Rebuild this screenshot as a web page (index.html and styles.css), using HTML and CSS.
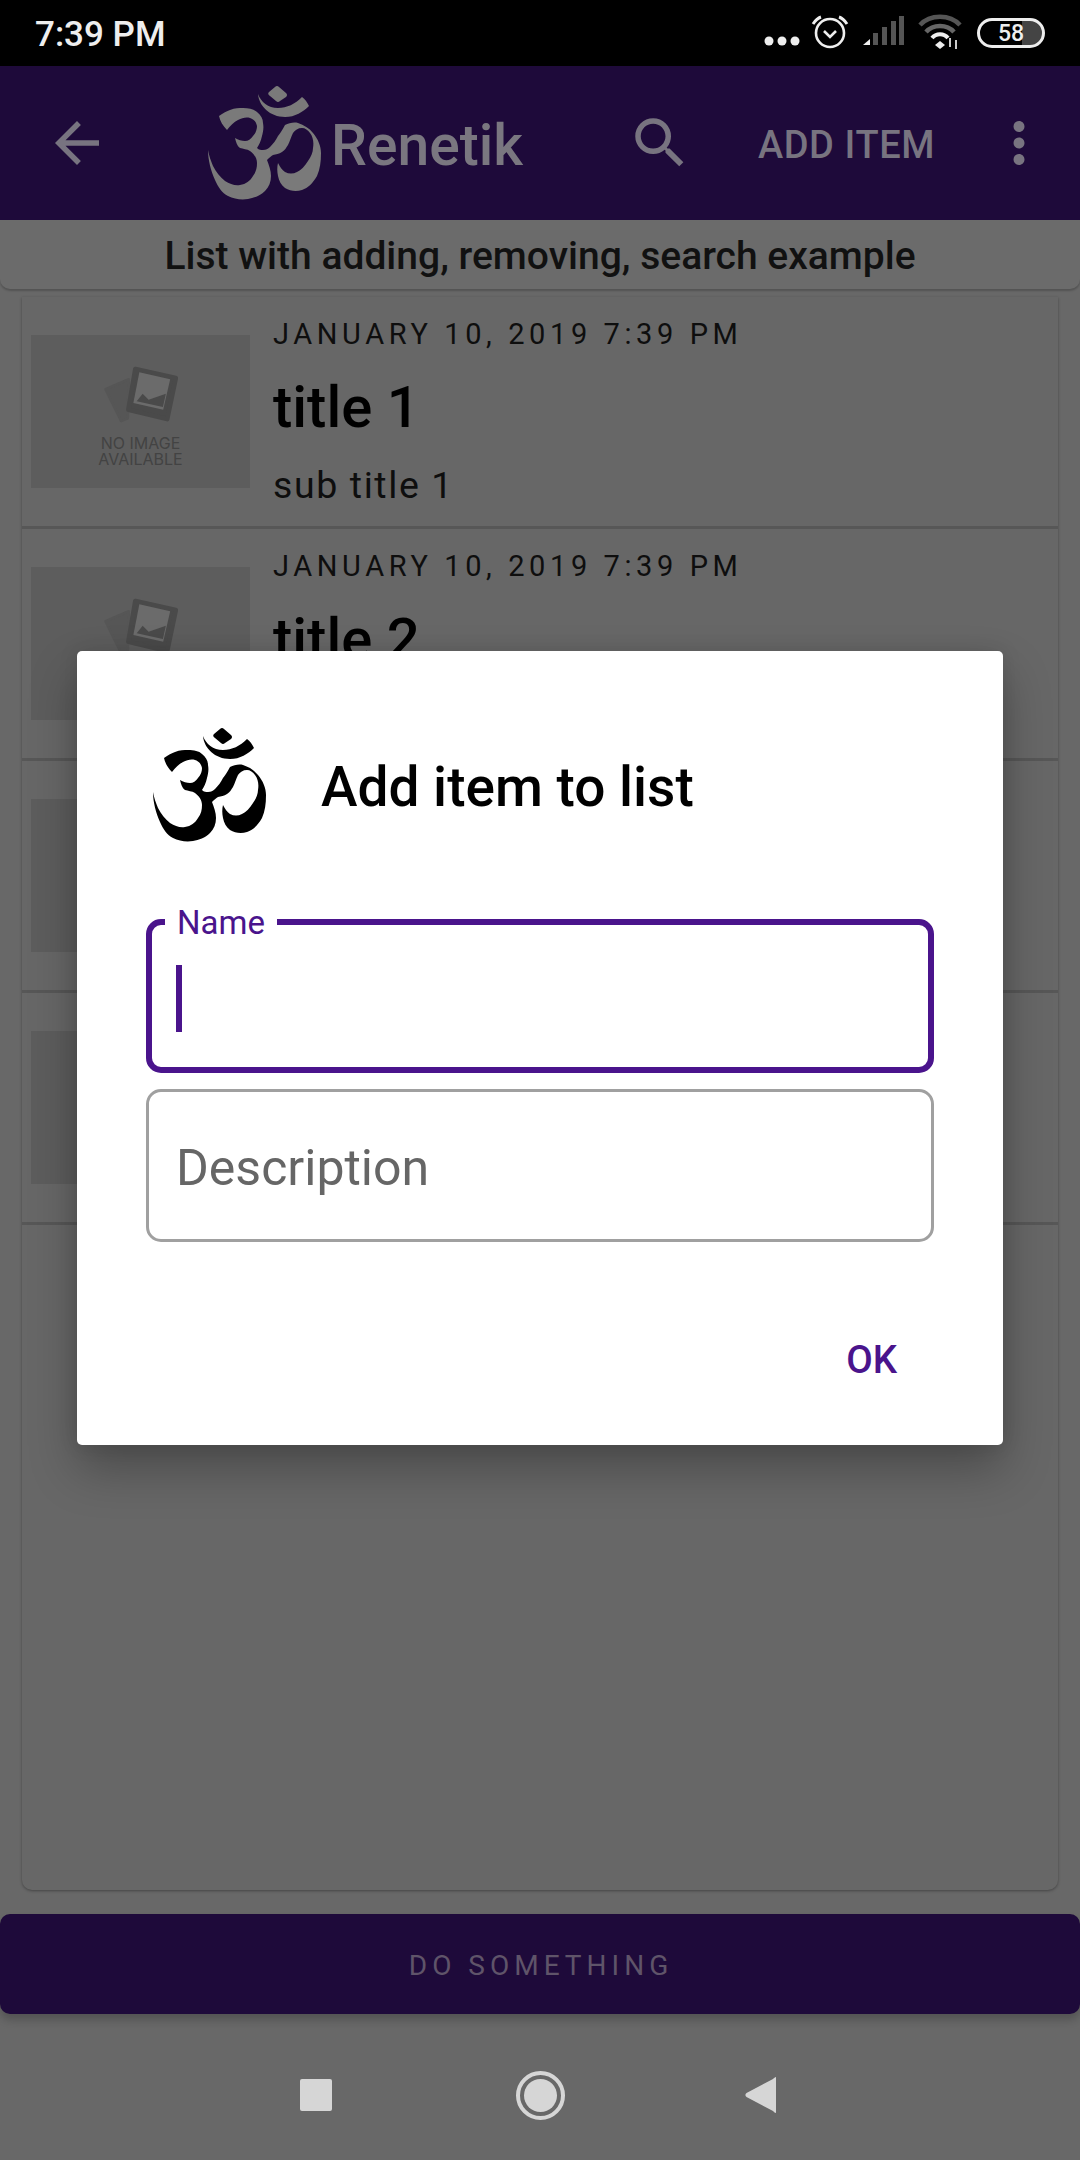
FILE: index.html
```html
<!DOCTYPE html>
<html lang="en">

<head>
    <meta charset="UTF-8">
    <meta name="viewport" content="width=device-width, initial-scale=1.0">
    <title>Renetik</title>
    <link rel="stylesheet" href="styles.css">
</head>

<body>
    <svg class="defs" width="0" height="0">
        <symbol id="om" viewBox="20 24 120 122">
            <path d="M90 29 Q92 27 94 29 L101 35 Q103 37 101 39 L95 43 Q93 45 91 43 L85 38 Q82 36 84 34Z" />
            <path d="M73 36 C74 48 85 59 100 59 C110 59 118 54 124 48 C122 44 120 41 117 39 C110 46 102 50 93 50 C83 50 76 44 73 36Z" />
            <path d="M34 58 C38 55 42 53 45 52 C50 50 54 50 58 50 C64 50 69 51 72 54 C76 57 78 61 78 65 C79 70 78 74 77 78 C76 83 74 87 72 90 C74 92 76 92 78 92 C81 92 83 91 85 89 C88 86 91 82 93 78 C96 74 98 71 100 67 C104 65 109 64 113 65 C119 67 124 70 128 75 C133 81 136 88 136 95 C136 104 135 111 132 118 C128 125 123 130 117 132 C111 134 105 133 100 130 C96 127 94 123 93 118 C92 113 92 109 93 105 C95 109 97 112 100 114 C104 116 108 116 112 114 C116 112 120 108 123 103 C126 99 128 94 128 90 C129 84 128 79 125 75 C123 72 120 70 117 70 C113 70 110 72 108 75 C106 79 105 83 103 87 C101 90 100 92 97 94 C94 96 91 96 88 97 C86 98 84 100 82 102 C84 107 86 113 86 118 C86 124 84 129 80 133 C75 138 69 140 63 141 C56 142 49 141 43 138 C37 135 33 129 30 122 C26 113 23 102 23 92 C24 98 26 103 28 108 C31 114 35 119 40 123 C45 126 50 128 55 127 C61 126 65 123 68 118 C71 114 72 110 72 105 C72 100 69 96 65 93 C62 91 58 91 55 90 C52 88 51 84 50 80 C53 82 57 83 60 83 C63 83 66 81 68 78 C71 75 72 71 72 68 C71 63 68 61 65 60 C61 59 57 60 53 62 C49 64 45 68 42 72 C38 68 35 63 34 58Z" />
        </symbol>
        <symbol id="noimage" viewBox="265 135 240 175">
            <path d="M278 208 L348 178 L345 296 L325 304 Z" fill="#565656" stroke="#565656" stroke-width="8" stroke-linejoin="round" />
            <path d="M368 147 L490 174 L464 298 L347 270 Z" fill="#4a4a4a" stroke="#4a4a4a" stroke-width="14" stroke-linejoin="round" />
            <path d="M380 157 L473 178 L452 270 L362 250 Z" fill="#6b6b6b" />
            <path d="M372 244 L390 222 L408 240 L460 222 L451 262 Z" fill="#4a4a4a" />
        </symbol>
    </svg>

    <div class="status-bar">
        <span class="status-time">7:39 PM</span>
        <div class="status-icons">
            <svg class="status-svg" width="200" height="40" viewBox="0 0 200 40">
                <!-- dots -->
                <circle cx="5" cy="27" r="4.5" fill="#eee" />
                <circle cx="18" cy="27" r="4.5" fill="#eee" />
                <circle cx="31" cy="27" r="4.5" fill="#eee" />
                <!-- alarm -->
                <circle cx="66" cy="19" r="14" fill="none" stroke="#eee" stroke-width="2.6" />
                <path d="M60 17 L66 23 L72 17" fill="none" stroke="#eee" stroke-width="2.6" />
                <path d="M49 10 C51 7 54 4 57 3 M83 10 C81 7 78 4 75 3" fill="none" stroke="#eee" stroke-width="3" />
                <!-- signal -->
                <path d="M99 31 L106 31 L106 25Z" fill="#eee" />
                <rect x="109" y="19" width="5" height="12" fill="#555" />
                <rect x="118" y="13" width="5" height="18" fill="#555" />
                <rect x="127" y="7" width="5" height="24" fill="#555" />
                <rect x="135" y="2" width="5" height="29" fill="#555" />
                <!-- wifi -->
                <path d="M156 11 C166 0 186 0 196 11" fill="none" stroke="#555" stroke-width="4.5" />
                <path d="M162 18 C169 10 183 10 190 18" fill="none" stroke="#666" stroke-width="4.5" />
                <path d="M168 24 C172 19 180 19 184 24" fill="none" stroke="#eee" stroke-width="4" />
                <path d="M171 31 L176 27 L181 31 L176 35Z" fill="#eee" />
                <path d="M186 33 V24 M192 26 V35" fill="none" stroke="#ccc" stroke-width="2" />
            </svg>
            <div class="battery"><span class="battery-text">58</span></div>
        </div>
    </div>

    <header class="app-bar">
        <svg class="app-icon" viewBox="0 0 24 24"><path d="M20 11H7.83l5.59-5.59L12 4l-8 8 8 8 1.41-1.41L7.83 13H20v-2z" /></svg>
        <svg class="app-logo"><use href="#om" /></svg>
        <span class="app-title">Renetik</span>
        <svg class="app-icon app-search" viewBox="0 0 24 24"><path d="M15.5 14h-.79l-.28-.27A6.471 6.471 0 0 0 16 9.5 6.5 6.5 0 1 0 9.5 16c1.61 0 3.09-.59 4.23-1.57l.27.28v.79l5 4.99L20.49 19l-4.99-5zm-6 0C7.01 14 5 11.99 5 9.5S7.01 5 9.5 5 14 7.01 14 9.5 11.99 14 9.5 14z" /></svg>
        <span class="app-action">ADD ITEM</span>
        <svg class="app-icon app-more" viewBox="0 0 24 24"><path d="M12 8c1.1 0 2-.9 2-2s-.9-2-2-2-2 .9-2 2 .9 2 2 2zm0 2c-1.1 0-2 .9-2 2s.9 2 2 2 2-.9 2-2-.9-2-2-2zm0 6c-1.1 0-2 .9-2 2s.9 2 2 2 2-.9 2-2-.9-2-2-2z" /></svg>
    </header>

    <div class="subtitle">List with adding, removing, search example</div>

    <main class="list">
        <div class="row">
            <div class="thumb">
                <svg class="thumb-icon"><use href="#noimage" /></svg>
                <span class="thumb-text">NO IMAGE<br>AVAILABLE</span>
            </div>
            <div class="row-text">
                <div class="row-date">JANUARY 10, 2019 7:39 PM</div>
                <div class="row-title">title 1</div>
                <div class="row-sub">sub title 1</div>
            </div>
        </div>
        <div class="row">
            <div class="thumb">
                <svg class="thumb-icon"><use href="#noimage" /></svg>
            </div>
            <div class="row-text">
                <div class="row-date">JANUARY 10, 2019 7:39 PM</div>
                <div class="row-title">title 2</div>
            </div>
        </div>
        <div class="row">
            <div class="thumb"></div>
        </div>
        <div class="row">
            <div class="thumb"></div>
        </div>
    </main>

    <div class="bottom-button">DO SOMETHING</div>

    <nav class="nav-bar">
        <span class="nav-square"></span>
        <span class="nav-circle"><span class="nav-disc"></span></span>
        <svg class="nav-back" width="31" height="36" viewBox="0 0 31 36"><path d="M31 0 V36 C30 36 29 35 28 34 L1.5 20 C0 19 0 17 1.5 16 L28 2 C29 1 30 0 31 0Z" /></svg>
    </nav>

    <section class="dialog">
        <div class="dialog-head">
            <svg class="dialog-logo"><use href="#om" /></svg>
            <span class="dialog-title">Add item to list</span>
        </div>
        <div class="field field-active">
            <span class="field-label">Name</span>
            <span class="caret"></span>
        </div>
        <div class="field">
            <span class="field-hint">Description</span>
        </div>
        <div class="dialog-actions">
            <span class="dialog-ok">OK</span>
        </div>
    </section>
</body>

</html>
```

FILE: styles.css
```css
* {
    box-sizing: border-box;
}

body {
    margin: 0;
    width: 1080px;
    height: 2160px;
    overflow: hidden;
    position: relative;
    display: flex;
    flex-direction: column;
    background-color: #686868;
    font-family: Roboto, 'Liberation Sans', sans-serif;
    color: #0e0e0e;
}

.defs {
    position: absolute;
}

.status-bar {
    height: 66px;
    flex: none;
    background-color: #000;
    display: flex;
    align-items: center;
    justify-content: space-between;
    padding: 0 35px;
}

.status-time {
    color: #eee;
    font-size: 35px;
    font-weight: 500;
    padding-top: 2px;
}

.status-icons {
    display: flex;
    align-items: center;
    gap: 13px;
}

.status-svg {
    display: block;
    margin-top: 2px;
}

.battery {
    width: 68px;
    height: 30px;
    border: 3px solid #eee;
    border-radius: 15px;
    background: linear-gradient(to right, transparent 68%, #444 68%);
    display: flex;
    align-items: center;
    justify-content: center;
}

.battery-text {
    color: #eee;
    font-size: 23px;
    font-weight: 500;
}

.app-bar {
    height: 154px;
    flex: none;
    background-color: #1e0a3a;
    display: flex;
    align-items: center;
    padding-left: 44px;
    color: #787480;
}

.app-icon {
    width: 66px;
    height: 66px;
    flex: none;
    fill: currentColor;
}

.app-logo {
    width: 120px;
    height: 122px;
    flex: none;
    margin-left: 95px;
    fill: #7a7a7a;
}

.app-title {
    margin-left: 6px;
    padding-top: 4px;
    font-size: 57px;
    font-weight: 500;
    color: #7a7780;
}

.app-search {
    margin-left: 104px;
}

.app-action {
    margin-left: 65px;
    padding-top: 4px;
    font-size: 38px;
    font-weight: 500;
    letter-spacing: 0.6px;
}

.app-more {
    margin-left: auto;
    margin-right: 28px;
}

.subtitle {
    height: 69px;
    flex: none;
    background-color: #6b6b6b;
    border-radius: 0 0 10px 10px;
    box-shadow: 0 2px 2px rgba(0, 0, 0, 0.2);
    text-align: center;
    font-size: 39px;
    font-weight: 500;
    line-height: 72px;
    color: #111;
}

.list {
    flex: 1;
    margin: 8px 22px 24px;
    border-radius: 0 0 10px 10px;
    background-color: #676767;
    box-shadow: 0 1px 3px rgba(0, 0, 0, 0.35);
}

.row {
    height: 232px;
    display: flex;
    align-items: center;
    padding-left: 9px;
    border-bottom: 3px solid #575757;
}

.thumb {
    width: 219px;
    height: 153px;
    flex: none;
    background-color: #5d5d5d;
    display: flex;
    flex-direction: column;
    align-items: center;
    padding-top: 30px;
}

.thumb-icon {
    width: 80px;
    height: 58px;
    flex: none;
}

.thumb-text {
    margin-top: 12px;
    font-family: Inter, Lato, sans-serif;
    font-size: 16px;
    line-height: 16px;
    text-align: center;
    color: #434343;
}

.row-text {
    margin-left: 23px;
    align-self: flex-start;
    padding-top: 20px;
}

.row-date {
    font-size: 29px;
    line-height: 34px;
    letter-spacing: 4.6px;
}

.row-title {
    margin-top: 24px;
    font-size: 58px;
    font-weight: 500;
    line-height: 64px;
    color: #000;
}

.row-sub {
    margin-top: 24px;
    font-size: 37.5px;
    line-height: 44px;
    letter-spacing: 1.6px;
}

.bottom-button {
    height: 100px;
    flex: none;
    background-color: #1e0a3a;
    border-radius: 10px;
    box-shadow: 0 6px 8px rgba(0, 0, 0, 0.2);
    text-align: center;
    font-size: 28px;
    line-height: 104px;
    letter-spacing: 5px;
    color: #5f5469;
    padding-left: 2px;
}

.nav-bar {
    height: 146px;
    flex: none;
    display: flex;
    align-items: center;
    justify-content: center;
    padding: 16px 4px 0 0;
}

.nav-square {
    width: 32px;
    height: 32px;
    margin-right: 184px;
    border-radius: 2px;
    background-color: #d6d6d6;
}

.nav-circle {
    width: 49px;
    height: 49px;
    margin-right: 180px;
    border: 4px solid #d6d6d6;
    border-radius: 50%;
    display: flex;
    align-items: center;
    justify-content: center;
}

.nav-disc {
    width: 33px;
    height: 33px;
    border-radius: 50%;
    background-color: #d6d6d6;
}

.nav-back {
    fill: #d6d6d6;
}

.dialog {
    position: absolute;
    left: 77px;
    top: 651px;
    width: 926px;
    height: 794px;
    padding: 73px 69px 0;
    background-color: #fff;
    border-radius: 5px;
    box-shadow: 0 24px 48px rgba(0, 0, 0, 0.28), 0 0 20px rgba(0, 0, 0, 0.1);
}

.dialog-head {
    display: flex;
    align-items: center;
    padding-left: 4px;
    margin-bottom: 73px;
}

.dialog-logo {
    width: 120px;
    height: 122px;
    flex: none;
    fill: #000;
}

.dialog-title {
    margin-left: 51px;
    padding-top: 3px;
    font-size: 55px;
    font-weight: 500;
    color: #000;
}

.field {
    position: relative;
    height: 153px;
    margin-bottom: 17px;
    padding: 5px 27px 0;
    border: 3px solid #a0a0a0;
    border-radius: 15px;
    display: flex;
    align-items: center;
}

.field-active {
    height: 154px;
    margin-bottom: 16px;
    padding: 0 24px;
    border: 6px solid #4a148c;
}

.field-hint {
    font-size: 50px;
    color: #666;
}

.field-label {
    position: absolute;
    left: 13px;
    top: -21px;
    padding: 0 12px;
    background-color: #fff;
    font-size: 33px;
    line-height: 38px;
    color: #4a148c;
}

.caret {
    width: 6px;
    height: 67px;
    background-color: #4a148c;
    margin-top: 4px;
}

.dialog-actions {
    display: flex;
    justify-content: flex-end;
    padding: 78px 37px 0 0;
}

.dialog-ok {
    font-size: 38.5px;
    font-weight: 500;
    color: #4a148c;
}
```
